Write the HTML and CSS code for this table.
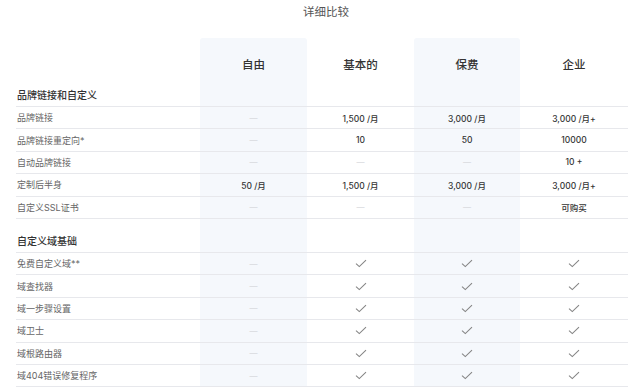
FILE: index.html
```html
<!DOCTYPE html>
<html lang="zh">

<head>
    <meta charset="UTF-8">
    <meta name="viewport" content="width=device-width, initial-scale=1.0">
    <title>详细比较</title>
    <link rel="stylesheet" href="styles.css">
</head>

<body>
    <div class="page">
        <h2 class="title">详细比较</h2>

        <div class="compare">
            <div class="row head">
                <div class="cell label"></div>
                <div class="cell hl">自由</div>
                <div class="cell">基本的</div>
                <div class="cell hl">保费</div>
                <div class="cell">企业</div>
            </div>

            <div class="row section first">
                <div class="cell label">品牌链接和自定义</div>
                <div class="cell hl"></div>
                <div class="cell"></div>
                <div class="cell hl"></div>
                <div class="cell"></div>
            </div>
            <div class="row">
                <div class="cell label">品牌链接</div>
                <div class="cell hl"><span class="dash">—</span></div>
                <div class="cell val">1,500 /月</div>
                <div class="cell hl val">3,000 /月</div>
                <div class="cell val">3,000 /月+</div>
            </div>
            <div class="row">
                <div class="cell label">品牌链接重定向*</div>
                <div class="cell hl"><span class="dash">—</span></div>
                <div class="cell val">10</div>
                <div class="cell hl val">50</div>
                <div class="cell val">10000</div>
            </div>
            <div class="row">
                <div class="cell label">自动品牌链接</div>
                <div class="cell hl"><span class="dash">—</span></div>
                <div class="cell"><span class="dash">—</span></div>
                <div class="cell hl"><span class="dash">—</span></div>
                <div class="cell val">10 +</div>
            </div>
            <div class="row">
                <div class="cell label">定制后半身</div>
                <div class="cell hl val">50 /月</div>
                <div class="cell val">1,500 /月</div>
                <div class="cell hl val">3,000 /月</div>
                <div class="cell val">3,000 /月+</div>
            </div>
            <div class="row">
                <div class="cell label">自定义SSL证书</div>
                <div class="cell hl"><span class="dash">—</span></div>
                <div class="cell"><span class="dash">—</span></div>
                <div class="cell hl"><span class="dash">—</span></div>
                <div class="cell val">可购买</div>
            </div>

            <div class="row section">
                <div class="cell label">自定义域基础</div>
                <div class="cell hl"></div>
                <div class="cell"></div>
                <div class="cell hl"></div>
                <div class="cell"></div>
            </div>
            <div class="row">
                <div class="cell label">免费自定义域**</div>
                <div class="cell hl"><span class="dash">—</span></div>
                <div class="cell"><svg class="check" viewBox="0 0 12 9"><path d="M1 4.6 L4.3 7.6 L11 1.2"/></svg></div>
                <div class="cell hl"><svg class="check" viewBox="0 0 12 9"><path d="M1 4.6 L4.3 7.6 L11 1.2"/></svg></div>
                <div class="cell"><svg class="check" viewBox="0 0 12 9"><path d="M1 4.6 L4.3 7.6 L11 1.2"/></svg></div>
            </div>
            <div class="row">
                <div class="cell label">域查找器</div>
                <div class="cell hl"><span class="dash">—</span></div>
                <div class="cell"><svg class="check" viewBox="0 0 12 9"><path d="M1 4.6 L4.3 7.6 L11 1.2"/></svg></div>
                <div class="cell hl"><svg class="check" viewBox="0 0 12 9"><path d="M1 4.6 L4.3 7.6 L11 1.2"/></svg></div>
                <div class="cell"><svg class="check" viewBox="0 0 12 9"><path d="M1 4.6 L4.3 7.6 L11 1.2"/></svg></div>
            </div>
            <div class="row">
                <div class="cell label">域一步骤设置</div>
                <div class="cell hl"><span class="dash">—</span></div>
                <div class="cell"><svg class="check" viewBox="0 0 12 9"><path d="M1 4.6 L4.3 7.6 L11 1.2"/></svg></div>
                <div class="cell hl"><svg class="check" viewBox="0 0 12 9"><path d="M1 4.6 L4.3 7.6 L11 1.2"/></svg></div>
                <div class="cell"><svg class="check" viewBox="0 0 12 9"><path d="M1 4.6 L4.3 7.6 L11 1.2"/></svg></div>
            </div>
            <div class="row">
                <div class="cell label">域卫士</div>
                <div class="cell hl"><span class="dash">—</span></div>
                <div class="cell"><svg class="check" viewBox="0 0 12 9"><path d="M1 4.6 L4.3 7.6 L11 1.2"/></svg></div>
                <div class="cell hl"><svg class="check" viewBox="0 0 12 9"><path d="M1 4.6 L4.3 7.6 L11 1.2"/></svg></div>
                <div class="cell"><svg class="check" viewBox="0 0 12 9"><path d="M1 4.6 L4.3 7.6 L11 1.2"/></svg></div>
            </div>
            <div class="row">
                <div class="cell label">域根路由器</div>
                <div class="cell hl"><span class="dash">—</span></div>
                <div class="cell"><svg class="check" viewBox="0 0 12 9"><path d="M1 4.6 L4.3 7.6 L11 1.2"/></svg></div>
                <div class="cell hl"><svg class="check" viewBox="0 0 12 9"><path d="M1 4.6 L4.3 7.6 L11 1.2"/></svg></div>
                <div class="cell"><svg class="check" viewBox="0 0 12 9"><path d="M1 4.6 L4.3 7.6 L11 1.2"/></svg></div>
            </div>
            <div class="row">
                <div class="cell label">域404错误修复程序</div>
                <div class="cell hl"><span class="dash">—</span></div>
                <div class="cell"><svg class="check" viewBox="0 0 12 9"><path d="M1 4.6 L4.3 7.6 L11 1.2"/></svg></div>
                <div class="cell hl"><svg class="check" viewBox="0 0 12 9"><path d="M1 4.6 L4.3 7.6 L11 1.2"/></svg></div>
                <div class="cell"><svg class="check" viewBox="0 0 12 9"><path d="M1 4.6 L4.3 7.6 L11 1.2"/></svg></div>
            </div>
        </div>
    </div>
</body>

</html>
```

FILE: styles.css
```css
body {
    margin: 0;
    background: #fff;
    font-family: Inter, "Noto Sans CJK SC", sans-serif;
    color: #333;
    overflow: hidden;
}

.page {
    padding: 0 12px 0 16px;
}

.title {
    margin: 0;
    height: 38px;
    padding-top: 5px;
    padding-left: 8px;
    box-sizing: border-box;
    text-align: center;
    font-size: 11.5px;
    line-height: 14px;
    font-weight: 400;
    color: #555;
}

.compare {
    width: 612px;
}

.row {
    display: grid;
    grid-template-columns: 184px 107px 107px 106px 108px;
    border-bottom: 1px solid #e7e8ec;
    height: 21.4px;
}

.cell {
    display: flex;
    justify-content: center;
    align-items: center;
    font-size: 8.5px;
}

.cell.label {
    justify-content: flex-start;
    padding-left: 1px;
    font-size: 9px;
    color: #666;
}

.hl {
    background-color: #f5f8fc;
}

.val {
    font-weight: 500;
    color: #333;
}

.dash {
    color: #d4d6da;
    font-size: 8px;
}

.check {
    width: 12px;
    height: 9px;
    fill: none;
    stroke: #858585;
    stroke-width: 1.1;
}

/* header + section rows */
.row.head {
    height: 44px;
    border-bottom: none;
}

.row.head .cell {
    align-items: flex-end;
    padding-bottom: 10px;
    font-size: 11.5px;
    font-weight: 500;
    color: #333;
}

.row.head .hl {
    border-radius: 3px 3px 0 0;
}

.row.section {
    height: 33px;
}

.row.section.first {
    height: 24px;
}

.row.section .cell.label {
    align-items: flex-end;
    padding-bottom: 4px;
    font-size: 10px;
    font-weight: 500;
    color: #333;
}
```
